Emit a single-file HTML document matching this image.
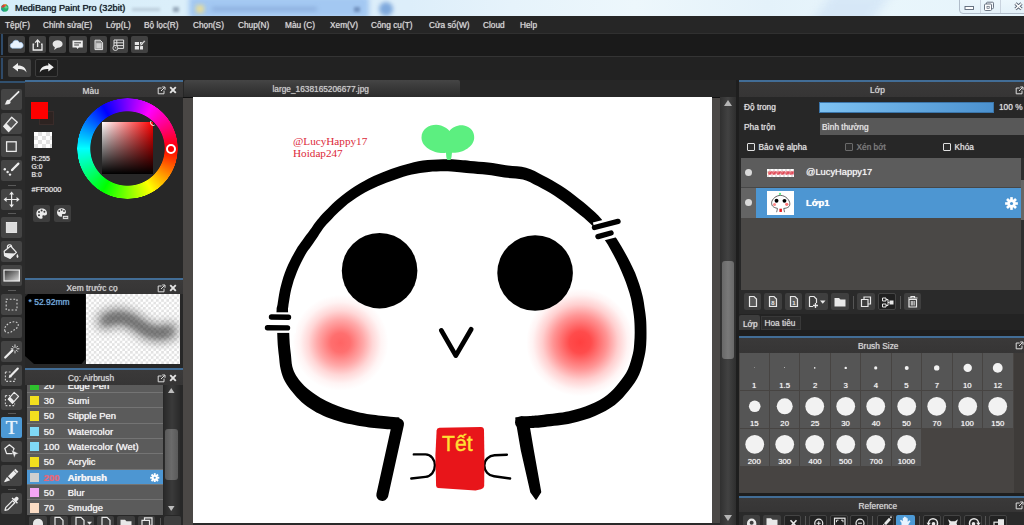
<!DOCTYPE html>
<html><head><meta charset="utf-8"><title>MediBang Paint Pro (32bit)</title>
<style>
*{box-sizing:border-box;margin:0;padding:0}
html,body{width:1024px;height:525px;overflow:hidden;background:#1d1d1d}
body{position:relative;font-family:"Liberation Sans","DejaVu Sans",sans-serif;font-size:8.3px;color:#d2d2d2}
.a{position:absolute}
.t{position:absolute;white-space:nowrap;line-height:1;text-shadow:0 0 .7px currentColor}
/* title */
#title{left:0;top:0;width:1024px;height:16.500px;overflow:hidden;background:linear-gradient(90deg,#d6edf9 0,#dbeffa 17%,#ddeefa 40%,#e6f3fb 50%,#edf7fc 62%,#e4f2fa 75%,#e9f6fc 85%,#e6f4fb 100%)}
#menubar{left:0;top:16px;width:1024px;height:17px;background:#262626}
#tb1{left:0;top:33px;width:1024px;height:23px;background:#1a1a1a;border-top:1px solid #303030}
#tb2{left:0;top:56px;width:1024px;height:25px;background:#222;border-top:1px solid #343434}
.btn{position:absolute;background:#414141;border-radius:2px}
.hdr{position:absolute;background:#333;border-top:2px solid #3d6a94}
.hdr .t{color:#cfcfcf}

.pn{position:absolute;background:#272727}
.hd{position:absolute;left:0;top:0;width:100%;border-top:2px solid #426d96;background:linear-gradient(#3a3939,#363535)}
.chk{background-color:#fff;background-image:linear-gradient(45deg,#e2e2e2 25%,transparent 25%,transparent 75%,#e2e2e2 75%),linear-gradient(45deg,#e2e2e2 25%,transparent 25%,transparent 75%,#e2e2e2 75%)}
</style></head><body>
<div id="title" class="a"><div class="a" style="left:189px;top:-4px;width:180px;height:22px;border-radius:4px;background:#a3c8f2;filter:blur(2.500px)"></div><div class="a" style="left:196px;top:5px;width:8px;height:8px;background:#e6dc9a;filter:blur(2px)"></div><div class="a" style="left:212px;top:7px;width:105px;height:4px;background:#7f9fd0;opacity:.6;filter:blur(2px)"></div><div class="a" style="left:354px;top:7px;width:6px;height:5px;background:#5b79a8;opacity:.7;filter:blur(1.500px)"></div><div class="a" style="left:379px;top:2px;width:14px;height:14px;border-radius:50%;background:#7fa9dd;filter:blur(2px)"></div><div class="a" style="left:132px;top:8px;width:28px;height:3px;background:#9aa8b8;opacity:.5;filter:blur(1.500px)"></div><div class="a" style="left:173px;top:7px;width:6px;height:5px;background:#66778c;opacity:.6;filter:blur(1.500px)"></div><div class="a" style="left:820px;top:-10px;width:60px;height:40px;background:#cfe2f5;opacity:.7;transform:skewX(-35deg);filter:blur(6px)"></div></div>
<div id="menubar" class="a"></div>
<div id="tb1" class="a"></div>
<div id="tb2" class="a"></div>
<svg class="a" style="left:0;top:2px" width="11" height="12" viewBox="0 2 11 12"><circle cx="4.800" cy="8" r="3.700" fill="#27b06c"/><path d="M1.200 7.600A3.700 3.700 0 0 1 6.600 4.700C5.800 6.600 4 7.600 1.200 7.600Z" fill="#e23b3b"/><path d="M3.400 4.600A3.700 3.700 0 0 1 6.800 4.800C6.200 5.600 5 5.800 3.400 4.600Z" fill="#f6a533"/><path d="M1.100 8A3.700 3.700 0 0 0 4 11.600C3.600 10 2.800 8.800 1.100 8Z" fill="#1f8f9f"/><ellipse cx="6" cy="7.200" rx="1.500" ry="1.200" fill="#7fe0a0" opacity=".7"/></svg>
<div class="t" style="left:15px;top:3.5px;font-size:9.2px;color:#16202a">MediBang Paint Pro (32bit)</div>
<div class="t m" style="left:5px;top:20.5px">Tệp(F)</div>
<div class="t m" style="left:43px;top:20.5px">Chỉnh sửa(E)</div>
<div class="t m" style="left:106px;top:20.5px">Lớp(L)</div>
<div class="t m" style="left:144px;top:20.5px">Bộ lọc(R)</div>
<div class="t m" style="left:193px;top:20.5px">Chọn(S)</div>
<div class="t m" style="left:238px;top:20.5px">Chụp(N)</div>
<div class="t m" style="left:285px;top:20.5px">Màu (C)</div>
<div class="t m" style="left:330px;top:20.5px">Xem(V)</div>
<div class="t m" style="left:371px;top:20.5px">Công cụ(T)</div>
<div class="t m" style="left:429px;top:20.5px">Cửa sổ(W)</div>
<div class="t m" style="left:483px;top:20.5px">Cloud</div>
<div class="t m" style="left:520px;top:20.5px">Help</div>
<div class="a" style="left:958.500px;top:-3px;width:70px;height:16.500px;border:1px solid #b0bcc9;border-radius:0 0 0 4px;background:linear-gradient(#edf8fd,#e4f1f9)"></div>
<div class="a" style="left:979.500px;top:0;width:1px;height:13px;background:#c9d3de"></div><div class="a" style="left:999.500px;top:0;width:1px;height:13px;background:#c9d3de"></div>
<svg class="a" style="left:958px;top:0" width="66" height="14" viewBox="0 0 66 14"><rect x="7" y="6.500" width="8.500" height="3" fill="#fff" stroke="#5a6575" stroke-width=".9"/><rect x="28.500" y="2.200" width="7" height="6.500" rx="1" fill="#f4f8fc" stroke="#5a6575" stroke-width=".9"/><rect x="26.500" y="4" width="7" height="6.500" rx="1" fill="#fff" stroke="#5a6575" stroke-width=".9"/><rect x="29" y="6.300" width="2.200" height="2" fill="none" stroke="#5a6575" stroke-width=".7"/><path d="M57.500 3.500 63.500 9M63.500 3.500 57.500 9" stroke="#5a6575" stroke-width="3.200"/><path d="M57.500 3.500 63.500 9M63.500 3.500 57.500 9" stroke="#fff" stroke-width="1.500"/></svg>
<!--MENU-->
<div class="btn" style="left:8.10px;top:35.6px;width:17.3px;height:17.6px"><svg width="17.3" height="17.6" viewBox="0 0 17.3 17.6"><path d="M4.2 12.2a2.6 2.6 0 0 1 .3-5.1 3.6 3.6 0 0 1 6.9-.6 2.9 2.9 0 0 1 1.6 5.7Z" fill="#e8f3ff" stroke="#9cc8f5" stroke-width=".6"/></svg></div>
<div class="btn" style="left:28.55px;top:35.6px;width:17.3px;height:17.6px"><svg width="17.3" height="17.6" viewBox="0 0 17.3 17.6"><path d="M5.2 8.2H4.2V14H13V8.2H12" fill="none" stroke="#eee" stroke-width="1.3"/><path d="M8.6 11V4.5M6.2 6.6 8.6 4 11 6.6" fill="none" stroke="#eee" stroke-width="1.3"/></svg></div>
<div class="btn" style="left:49.00px;top:35.6px;width:17.3px;height:17.6px"><svg width="17.3" height="17.6" viewBox="0 0 17.3 17.6"><ellipse cx="8.6" cy="8" rx="5" ry="3.8" fill="#e6e6e6"/><path d="M6 10.5 5.2 14 9 11.2Z" fill="#e6e6e6"/></svg></div>
<div class="btn" style="left:69.45px;top:35.6px;width:17.3px;height:17.6px"><svg width="17.3" height="17.6" viewBox="0 0 17.3 17.6"><path d="M3.5 4.5H13.8V11.5H9.8L8.6 13 7.4 11.5H3.5Z" fill="#eee"/><path d="M5.2 6.8H12M5.2 9H10" stroke="#3d3d3d" stroke-width="1"/></svg></div>
<div class="btn" style="left:89.90px;top:35.6px;width:17.3px;height:17.6px"><svg width="17.3" height="17.6" viewBox="0 0 17.3 17.6"><path d="M5 4.2H10.2L12.6 6.6V13.6H5Z" fill="#8d8d8d" stroke="#e4e4e4" stroke-width="1"/><path d="M6.3 7.2H11.4V12.4H6.3Z" fill="#cfcfcf"/></svg></div>
<div class="btn" style="left:110.35px;top:35.6px;width:17.3px;height:17.6px"><svg width="17.3" height="17.6" viewBox="0 0 17.3 17.6"><path d="M4 4H13.6V12.4H4ZM4 6.8H13.6M4 9.6H13.6M6.8 4V12.4" fill="none" stroke="#e4e4e4" stroke-width="1"/><circle cx="5.4" cy="12" r="2.5" fill="#3d3d3d" stroke="#e4e4e4" stroke-width=".9"/><path d="M5.4 10.8V12.1H6.4" stroke="#e4e4e4" stroke-width=".7" fill="none"/></svg></div>
<div class="btn" style="left:130.80px;top:35.6px;width:17.3px;height:17.6px"><svg width="17.3" height="17.6" viewBox="0 0 17.3 17.6"><path d="M3.8 6H8V9H3.8ZM9 6H12V9H9ZM3.8 10H8V13.6H3.8ZM9 10H12V13.6H9Z" fill="#e4e4e4"/><path d="M9.4 8.6 13.2 4.2 14.4 5.2 10.6 9.6 9 10Z" fill="#e4e4e4" stroke="#3d3d3d" stroke-width=".5"/></svg></div>
<div class="btn" style="left:8px;top:59.2px;width:23.3px;height:17.6px"><svg width="23.3" height="17.6" viewBox="0 0 23.3 17.6"><path d="M4.5 8.2 10 4V6.4C15 6.4 18 9 18.6 13.4 16.6 10.6 14 9.8 10 10V12.4Z" fill="#efefef"/></svg></div>
<div class="btn" style="left:34.5px;top:59.2px;width:23.3px;height:17.6px;background:#1e1e1e;border:1px solid #3c3c3c"><svg width="21.3" height="15.6" viewBox="1 1 21.3 15.6"><path d="M18.8 8.2 13.3 4V6.4C8.3 6.4 5.3 9 4.7 13.4 6.7 10.6 9.3 9.8 13.3 10V12.4Z" fill="#efefef"/></svg></div>
<div class="a" style="left:1px;top:34px;width:1.5px;height:21px;background:#2f4a68"></div><div class="a" style="left:1px;top:58px;width:1.5px;height:21px;background:#2f4a68"></div><!--TOOLBARS-->
<div class="a" style="left:0;top:80.500px;width:25px;height:445px;background:#2a2a2a;border-top:2px solid #31506e"></div>
<div class="btn" style="left:1.3px;top:89.0px;width:21.2px;height:21px;background:#444"><svg width="21.2" height="21" viewBox="0 0 21.2 21"><path d="M17.600 2.800 8.600 11.600" stroke="#ececec" stroke-width="1.800" stroke-linecap="round"/><path d="M7.200 10.400 9.600 12.800C9.800 14.800 8 15.800 3.600 15.400 5 14.200 4.600 11.600 7.200 10.400Z" fill="#ececec"/></svg></div>
<div class="btn" style="left:1.3px;top:112.5px;width:21.2px;height:21px;background:#444"><svg width="21.2" height="21" viewBox="0 0 21.2 21"><path d="M10.700 4.200 16.300 9.300 7.600 18.600 2.700 13.400Z" fill="#555" stroke="#ececec" stroke-width="1.300" stroke-linejoin="round"/><path d="M5.600 10.600 10.600 15.600 7.600 18.600 2.700 13.400Z" fill="#ececec"/></svg></div>
<div class="btn" style="left:1.3px;top:136.0px;width:21.2px;height:21px;background:#444"><svg width="21.2" height="21" viewBox="0 0 21.2 21"><rect x="5.600" y="5.800" width="9.600" height="9.600" fill="#4a4a4a" stroke="#ececec" stroke-width="1.300"/></svg></div>
<div class="btn" style="left:1.3px;top:159.5px;width:21.2px;height:21px;background:#444"><svg width="21.2" height="21" viewBox="0 0 21.2 21"><path d="M17.400 3.600 11 10" stroke="#ececec" stroke-width="2.200" stroke-linecap="round"/><path d="M11.200 8.400 12.800 10 10 11.200Z" fill="#ececec"/><circle cx="3.800" cy="9.200" r="1.200" fill="#ececec"/><circle cx="6.600" cy="12" r="1.200" fill="#ececec"/><circle cx="9" cy="14.600" r="1.200" fill="#ececec"/></svg></div>
<div class="btn" style="left:1.3px;top:188.5px;width:21.2px;height:21px;background:#444"><svg width="21.2" height="21" viewBox="0 0 21.2 21"><path d="M10.600 4V17M4 10.500H17.200" stroke="#ececec" stroke-width="1.200"/><path d="M10.600 2.600 13 5.600H8.200ZM10.600 18.400 13 15.400H8.200ZM2.600 10.500 5.600 8.100V12.900ZM18.600 10.500 15.600 8.100V12.900Z" fill="#ececec"/></svg></div>
<div class="btn" style="left:1.3px;top:217.0px;width:21.2px;height:21px;background:#444"><svg width="21.2" height="21" viewBox="0 0 21.2 21"><rect x="5.300" y="5.400" width="10.400" height="10.200" fill="#dcdcdc" stroke="#f4f4f4" stroke-width=".8"/></svg></div>
<div class="btn" style="left:1.3px;top:241.0px;width:21.2px;height:21px;background:#444"><svg width="21.2" height="21" viewBox="0 0 21.2 21"><path d="M3.200 10.200 9.600 5 15.400 11.400 9.200 17.400 3.600 14.600Z" fill="none" stroke="#ececec" stroke-width="1.200" stroke-linejoin="round"/><path d="M3.400 12 14.200 12.400 9.200 17.400 3.600 14.600Z" fill="#ececec"/><path d="M6.600 7.600C5.400 3.400 10.400 2.200 10.800 6" fill="none" stroke="#ececec" stroke-width="1.100"/><path d="M16.200 12.800C17.600 14.800 18 16 16.600 17 15 16.200 15.400 14.600 16.200 12.800Z" fill="#ececec"/></svg></div>
<div class="btn" style="left:1.3px;top:265.0px;width:21.2px;height:21px;background:#444"><svg width="21.2" height="21" viewBox="0 0 21.2 21"><defs><linearGradient id="tg" x1="0" y1="0" x2="1" y2="1"><stop offset="0" stop-color="#2e2e2e"/><stop offset="1" stop-color="#d8d8d8"/></linearGradient></defs><rect x="3" y="5" width="15.400" height="11" fill="url(#tg)" stroke="#ececec" stroke-width="1.200"/></svg></div>
<div class="btn" style="left:1.3px;top:293.5px;width:21.2px;height:21px;background:#444"><svg width="21.2" height="21" viewBox="0 0 21.2 21"><rect x="5.200" y="5.200" width="10.800" height="10.800" fill="none" stroke="#cfcfcf" stroke-width="1.100" stroke-dasharray="1.800 1.800"/></svg></div>
<div class="btn" style="left:1.3px;top:317.0px;width:21.2px;height:21px;background:#444"><svg width="21.2" height="21" viewBox="0 0 21.2 21"><path d="M4 14C2.600 11 5.400 7.400 9.400 5.600 13.400 3.800 17.800 5 17.200 8.400 16.600 11.600 13 12.600 10.600 14.600 8.400 16.400 5 16.200 4 14Z" fill="none" stroke="#cfcfcf" stroke-width="1.100" stroke-dasharray="1.700 1.600"/></svg></div>
<div class="btn" style="left:1.3px;top:341.0px;width:21.2px;height:21px;background:#444"><svg width="21.2" height="21" viewBox="0 0 21.2 21"><path d="M4.200 16.600 11.400 9.400" stroke="#ececec" stroke-width="2.200" stroke-linecap="round"/><path d="M14 3.400V6.800M14 9.600V12.400M9.800 7.800H12.400M15.600 7.800H18.400M11.200 5 12.800 6.600M16.800 5 15.200 6.600M16.800 10.600 15.200 9" stroke="#ececec" stroke-width=".9"/></svg></div>
<div class="btn" style="left:1.3px;top:365.0px;width:21.2px;height:21px;background:#444"><svg width="21.2" height="21" viewBox="0 0 21.2 21"><path d="M4.400 7H10M4.400 7V16.400H14V12" fill="none" stroke="#cfcfcf" stroke-width="1.100" stroke-dasharray="1.800 1.600"/><path d="M16.800 3.600 9.800 10.800" stroke="#ececec" stroke-width="2.200" stroke-linecap="round"/><path d="M8.600 9.600 11 12 7.600 13Z" fill="#ececec"/></svg></div>
<div class="btn" style="left:1.3px;top:388.5px;width:21.2px;height:21px;background:#444"><svg width="21.2" height="21" viewBox="0 0 21.2 21"><path d="M4.400 6.600H9M4.400 6.600V16.600H13.600V14.600" fill="none" stroke="#cfcfcf" stroke-width="1.100" stroke-dasharray="1.800 1.600"/><path d="M13.200 3.400 17.600 7.400 11.400 14.400 7.200 10.200Z" fill="#555" stroke="#ececec" stroke-width="1.200" stroke-linejoin="round"/><path d="M9.200 8 13.400 12.200 11.400 14.400 7.200 10.200Z" fill="#ececec"/></svg></div>
<div class="btn" style="left:1.3px;top:416.5px;width:21.2px;height:21px;background:#4d9ad6"><div class="t" style="left:4.5px;top:1px;font-family:'Liberation Serif',serif;font-size:19px;color:#e6f2fb">T</div></div>
<div class="btn" style="left:1.3px;top:440.5px;width:21.2px;height:21px;background:#444"><svg width="21.2" height="21" viewBox="0 0 21.2 21"><path d="M3.800 7.400 8.400 3.800 13 7.400 11.400 12.600H5.600Z" fill="none" stroke="#ececec" stroke-width="1.300" stroke-linejoin="round"/><path d="M10.400 9 17.800 12.400 14.600 13.600 13.400 17Z" fill="#ececec" stroke="#444" stroke-width=".5"/></svg></div>
<div class="btn" style="left:1.3px;top:464.5px;width:21.2px;height:21px;background:#444"><svg width="21.2" height="21" viewBox="0 0 21.2 21"><path d="M14.400 3.800 17.400 6.800 10 14.200 7 11.200Z" fill="#ececec"/><path d="M12.600 5.200 15.800 8.400" stroke="#444" stroke-width=".8"/><path d="M6 12 9.200 15.200 3.600 17.200 3.200 16.400Z" fill="#ececec"/></svg></div>
<div class="btn" style="left:1.3px;top:493.0px;width:21.2px;height:21px;background:#444"><svg width="21.2" height="21" viewBox="0 0 21.2 21"><path d="M11.600 7.600 13.800 9.800 7 16.600 4 17.400 4.800 14.400Z" fill="none" stroke="#ececec" stroke-width="1.300" stroke-linejoin="round"/><path d="M10.600 5.400 16 10.800 17 9.800 15.600 8.400 17.400 6.600C18.400 5 16.400 3 14.800 4L13 5.800 11.600 4.400Z" fill="#ececec"/></svg></div>
<div class="a" style="left:8px;top:184.5px;width:8px;height:1px;background:#5a5a5a"></div>
<div class="a" style="left:8px;top:213.0px;width:8px;height:1px;background:#5a5a5a"></div>
<div class="a" style="left:8px;top:289.5px;width:8px;height:1px;background:#5a5a5a"></div>
<div class="a" style="left:8px;top:413.0px;width:8px;height:1px;background:#5a5a5a"></div>
<div class="a" style="left:8px;top:489.0px;width:8px;height:1px;background:#5a5a5a"></div>
<div class="pn" style="left:25px;top:80px;width:157.700px;height:198px"><div class="hd" style="height:16.5px"><div class="t" style="left:57.5px;top:4.500px;font-size:8.4px;color:#cfcfcf">Màu</div><svg class="a" style="left:131.5px;top:3.5px" width="9" height="9" viewBox="0 0 9 9"><path d="M4.6 2H1.2V7.8H7V4.6" fill="none" stroke="#ddd" stroke-width="1"/><path d="M4 5 7.6 1.4M5.2 1H8V3.8" fill="none" stroke="#ddd" stroke-width="1"/></svg><svg class="a" style="left:144.0px;top:4.0px" width="8" height="8" viewBox="0 0 8 8"><path d="M1.2 1.2 6.8 6.8M6.8 1.2 1.2 6.8" stroke="#e4e4e4" stroke-width="1.9"/></svg></div>
<div class="a" style="left:13.5px;top:30.5px;width:15.5px;height:14px;background:#2d2321;border:1px solid #3a2c2a"></div><div class="a" style="left:6px;top:22px;width:17px;height:16.5px;background:#fe0000"></div><div class="a chk" style="left:9px;top:51.5px;width:17.5px;height:16.5px;background-size:8px 8px;background-position:0 0,4px 4px"></div><div class="t" style="left:6.5px;top:75.5px;font-size:6.9px;color:#e0e0e0">R:255</div><div class="t" style="left:6.5px;top:83.5px;font-size:6.9px;color:#e0e0e0">G:0</div><div class="t" style="left:6.5px;top:91.5px;font-size:6.9px;color:#e0e0e0">B:0</div><div class="t" style="left:6.5px;top:105.5px;font-size:7.5px;color:#e0e0e0">#FF0000</div><div class="btn" style="left:8px;top:124.5px;width:17.3px;height:17.3px;background:#3e3e3e"><svg width="17.3" height="17.3" viewBox="0 0 17.3 17.3"><path d="M8.8 3.6C5.4 3.6 3.4 6 3.4 8.8 3.4 11.8 5.8 13.8 8.4 13.8 10 13.8 9.6 12.4 9.4 11.6 9.2 10.6 10 10.2 11 10.4 12.8 10.8 14 9.8 14 8.2 14 5.6 11.8 3.6 8.8 3.6Z" fill="#ececec"/><circle cx="6" cy="7" r="1" fill="#3e3e3e"/><circle cx="8.6" cy="5.6" r="1" fill="#3e3e3e"/><circle cx="11.4" cy="6.8" r="1" fill="#3e3e3e"/><circle cx="6" cy="10.2" r="1" fill="#3e3e3e"/></svg></div><div class="btn" style="left:28.5px;top:124.5px;width:17.3px;height:17.3px;background:#3e3e3e"><svg width="17.3" height="17.3" viewBox="0 0 17.3 17.3"><path d="M7.6 3.2C4.8 3.2 3 5.2 3 7.6 3 10 5 11.8 7.2 11.8 8.6 11.8 8.2 10.6 8 10 7.8 9.2 8.6 8.8 9.4 9 11 9.2 12 8.4 12 7 12 4.8 10.2 3.2 7.6 3.2Z" fill="#ececec"/><circle cx="5.2" cy="6" r=".9" fill="#3e3e3e"/><circle cx="7.6" cy="4.9" r=".9" fill="#3e3e3e"/><circle cx="10" cy="6" r=".9" fill="#3e3e3e"/><rect x="8.6" y="10.6" width="6" height="3.6" fill="#ececec" stroke="#3e3e3e" stroke-width=".6"/><path d="M9.8 12.4H13.4" stroke="#3e3e3e" stroke-width=".8"/></svg></div><div class="a" style="left:52px;top:18px;width:101px;height:101px;border-radius:50%;background:conic-gradient(from 90deg,#ff0000,#ffff00,#00ff00,#00ffff,#0000ff,#ff00ff,#ff0000);-webkit-mask:radial-gradient(circle closest-side,transparent 36.8px,#000 37.6px,#000 50px,transparent 50.6px);mask:radial-gradient(circle closest-side,transparent 36.8px,#000 37.6px,#000 50px,transparent 50.6px)"></div><div class="a" style="left:77px;top:42px;width:51px;height:51.5px;background:linear-gradient(to top,#000,rgba(0,0,0,0)),linear-gradient(to right,#fff,#f00)"></div><div class="a" style="left:124.500px;top:38.500px;width:7.500px;height:7.500px;border-radius:50%;border:1.500px solid #fff;clip-path:inset(2.500px 2.500px 0 0)"></div><div class="a" style="left:140.5px;top:63.5px;width:10px;height:10px;border-radius:50%;border:2px solid #fff;background:#f00"></div></div>
<div class="pn" style="left:25px;top:278px;width:157.700px;height:90px"><div class="hd" style="height:16px"><div class="t" style="left:41.500px;top:4.200px;font-size:8.400px;color:#cfcfcf">Xem trước cọ</div><svg class="a" style="left:131.5px;top:3.5px" width="9" height="9" viewBox="0 0 9 9"><path d="M4.6 2H1.2V7.8H7V4.6" fill="none" stroke="#ddd" stroke-width="1"/><path d="M4 5 7.6 1.4M5.2 1H8V3.8" fill="none" stroke="#ddd" stroke-width="1"/></svg><svg class="a" style="left:144.0px;top:4.0px" width="8" height="8" viewBox="0 0 8 8"><path d="M1.2 1.2 6.8 6.8M6.8 1.2 1.2 6.8" stroke="#e4e4e4" stroke-width="1.9"/></svg></div><svg class="a" style="left:0;top:16px" width="61" height="70" viewBox="0 0 61 70"><path d="M3 0H60.500V65L56.500 70H9L0 62V3Z" fill="#000"/></svg><div class="t" style="left:3.500px;top:19.500px;font-size:8.500px;color:#6fa8dc">* 52.92mm</div><div class="a chk" style="left:61px;top:16.300px;width:93.600px;height:70px;background-size:5.200px 5.200px;background-position:0 0,2.600px 2.600px;overflow:hidden"><svg width="94" height="70" viewBox="0 0 94 70"><defs><filter id="bl" x="-30%" y="-100%" width="160%" height="300%"><feGaussianBlur stdDeviation="5.500"/></filter></defs><path d="M19 27C30 20 42 23 54 32 64 40 74 41 84 37" fill="none" stroke="#1a1a1a" stroke-opacity=".7" stroke-width="14" stroke-linecap="round" filter="url(#bl)"/></svg></div></div>
<div class="pn" style="left:25px;top:368px;width:157.700px;height:157px;overflow:hidden"><div class="hd" style="height:16.500px"><div class="t" style="left:43px;top:3.800px;font-size:8.4px;color:#cfcfcf">Cọ: Airbrush</div><svg class="a" style="left:131.5px;top:3.5px" width="9" height="9" viewBox="0 0 9 9"><path d="M4.6 2H1.2V7.8H7V4.6" fill="none" stroke="#ddd" stroke-width="1"/><path d="M4 5 7.6 1.4M5.2 1H8V3.8" fill="none" stroke="#ddd" stroke-width="1"/></svg><svg class="a" style="left:144.0px;top:4.0px" width="8" height="8" viewBox="0 0 8 8"><path d="M1.2 1.2 6.8 6.8M6.8 1.2 1.2 6.8" stroke="#e4e4e4" stroke-width="1.9"/></svg></div>
<div class="a" style="left:1.5px;top:16.5px;width:136.5px;height:130px;background:#5b5b5b;overflow:hidden"><div class="a" style="left:0;top:-6.85px;width:136.5px;height:15.35px;border-bottom:1px solid #747474;"><div class="a" style="left:3px;top:3px;width:9.800px;height:9.200px;background:#2ec02e"></div><div class="t" style="left:17.3px;top:3px;font-size:9.45px;color:#efefef;">20</div><div class="t" style="left:41.3px;top:3px;font-size:9.45px;color:#f4f4f4;">Edge Pen</div></div>
<div class="a" style="left:0;top:8.50px;width:136.5px;height:15.35px;border-bottom:1px solid #747474;"><div class="a" style="left:3px;top:3px;width:9.800px;height:9.200px;background:#f2df1e"></div><div class="t" style="left:17.3px;top:3px;font-size:9.45px;color:#efefef;">30</div><div class="t" style="left:41.3px;top:3px;font-size:9.45px;color:#f4f4f4;">Sumi</div></div>
<div class="a" style="left:0;top:23.85px;width:136.5px;height:15.35px;border-bottom:1px solid #747474;"><div class="a" style="left:3px;top:3px;width:9.800px;height:9.200px;background:#f2df1e"></div><div class="t" style="left:17.3px;top:3px;font-size:9.45px;color:#efefef;">50</div><div class="t" style="left:41.3px;top:3px;font-size:9.45px;color:#f4f4f4;">Stipple Pen</div></div>
<div class="a" style="left:0;top:39.20px;width:136.5px;height:15.35px;border-bottom:1px solid #747474;"><div class="a" style="left:3px;top:3px;width:9.800px;height:9.200px;background:#7fd9f7"></div><div class="t" style="left:17.3px;top:3px;font-size:9.45px;color:#efefef;">50</div><div class="t" style="left:41.3px;top:3px;font-size:9.45px;color:#f4f4f4;">Watercolor</div></div>
<div class="a" style="left:0;top:54.55px;width:136.5px;height:15.35px;border-bottom:1px solid #747474;"><div class="a" style="left:3px;top:3px;width:9.800px;height:9.200px;background:#7fd9f7"></div><div class="t" style="left:17.3px;top:3px;font-size:9.45px;color:#efefef;">100</div><div class="t" style="left:41.3px;top:3px;font-size:9.45px;color:#f4f4f4;">Watercolor (Wet)</div></div>
<div class="a" style="left:0;top:69.90px;width:136.5px;height:15.35px;border-bottom:1px solid #747474;"><div class="a" style="left:3px;top:3px;width:9.800px;height:9.200px;background:#f2df1e"></div><div class="t" style="left:17.3px;top:3px;font-size:9.45px;color:#efefef;">50</div><div class="t" style="left:41.3px;top:3px;font-size:9.45px;color:#f4f4f4;">Acrylic</div></div>
<div class="a" style="left:0;top:85.25px;width:136.5px;height:15.35px;border-bottom:1px solid #747474;background:#4d96d2;"><div class="a" style="left:3px;top:3px;width:9.800px;height:9.200px;background:#cfcfcf"></div><div class="t" style="left:17.3px;top:3px;font-size:9.45px;color:#e5687c;font-weight:bold;">200</div><div class="t" style="left:41.3px;top:3px;font-size:9.45px;color:#f4f4f4;font-weight:bold;">Airbrush</div><svg class="a" style="left:123.5px;top:3px" width="9.5" height="9.5" viewBox="-5 -5 10 10"><g fill="#fff"><circle r="3"/><rect x="-1" y="-4.8" width="2" height="3" transform="rotate(0)"/><rect x="-1" y="-4.8" width="2" height="3" transform="rotate(45)"/><rect x="-1" y="-4.8" width="2" height="3" transform="rotate(90)"/><rect x="-1" y="-4.8" width="2" height="3" transform="rotate(135)"/><rect x="-1" y="-4.8" width="2" height="3" transform="rotate(180)"/><rect x="-1" y="-4.8" width="2" height="3" transform="rotate(225)"/><rect x="-1" y="-4.8" width="2" height="3" transform="rotate(270)"/><rect x="-1" y="-4.8" width="2" height="3" transform="rotate(315)"/></g><circle r="1.1" fill="#4d96d2"/></svg></div>
<div class="a" style="left:0;top:100.60px;width:136.5px;height:15.35px;border-bottom:1px solid #747474;"><div class="a" style="left:3px;top:3px;width:9.800px;height:9.200px;background:#f5a6f5"></div><div class="t" style="left:17.3px;top:3px;font-size:9.45px;color:#efefef;">50</div><div class="t" style="left:41.3px;top:3px;font-size:9.45px;color:#f4f4f4;">Blur</div></div>
<div class="a" style="left:0;top:115.95px;width:136.5px;height:15.35px;border-bottom:1px solid #747474;"><div class="a" style="left:3px;top:3px;width:9.800px;height:9.200px;background:#fbdcc4"></div><div class="t" style="left:17.3px;top:3px;font-size:9.45px;color:#efefef;">70</div><div class="t" style="left:41.3px;top:3px;font-size:9.45px;color:#f4f4f4;">Smudge</div></div>
</div>
<div class="a" style="left:138.5px;top:16.5px;width:16.5px;height:130px;background:linear-gradient(90deg,#2a2a2a,#3a3a3a 50%,#2a2a2a)"><div class="a" style="left:1px;top:44px;width:13.5px;height:51px;border-radius:3px;background:linear-gradient(90deg,#5a5a5a,#6b6b6b 50%,#5a5a5a)"></div><svg class="a" style="left:4.500px;top:3.500px" width="6.500" height="5" viewBox="0 0 8 6"><path d="M4 0 8 6H0Z" fill="#bdbdbd"/></svg><svg class="a" style="left:4.500px;top:121.500px" width="6.500" height="5" viewBox="0 0 8 6"><path d="M4 6 8 0H0Z" fill="#bdbdbd"/></svg></div>
<div class="btn" style="left:3.8px;top:148px;width:18.2px;height:17px;background:#3e3e3e"><svg width="18.2" height="17" viewBox="0 2.2 18.2 17"><path d="M4 9.5A5 4.6 0 0 1 14 9.5V13H4Z" fill="#e8e8e8"/></svg></div><div class="btn" style="left:25.0px;top:148px;width:17.8px;height:17px;background:#3e3e3e"><svg width="17.8" height="17" viewBox="0 2.2 17.8 17"><path d="M5 3.5H10L13 6.5V14H5Z" fill="none" stroke="#e8e8e8" stroke-width="1.2"/></svg></div><div class="btn" style="left:46.0px;top:148px;width:22.5px;height:17px;background:#3e3e3e"><svg width="22.5" height="17" viewBox="0 2.2 22.5 17"><path d="M5 3.5H10L13 6.5V14H5Z" fill="none" stroke="#e8e8e8" stroke-width="1.2"/><path d="M16 8H21L18.5 11Z" fill="#e8e8e8"/></svg></div><div class="btn" style="left:71.5px;top:148px;width:17.5px;height:17px;background:#3e3e3e"><svg width="17.5" height="17" viewBox="0 2.2 17.5 17"><path d="M5 3.5H10L13 6.5V14H5Z" fill="none" stroke="#e8e8e8" stroke-width="1.2"/></svg></div><div class="btn" style="left:92.0px;top:148px;width:18.0px;height:17px;background:#3e3e3e"><svg width="18.0" height="17" viewBox="0 2.2 18.0 17"><path d="M3.5 6H8L9.5 7.5H14.5V14H3.5Z" fill="#e8e8e8"/></svg></div><div class="btn" style="left:112.8px;top:148px;width:17.2px;height:17px;background:#3e3e3e"><svg width="17.2" height="17" viewBox="0 2.2 17.2 17"><path d="M4 6.5H11.5V14H4ZM6.5 6V4H14V11.5H12" fill="none" stroke="#e8e8e8" stroke-width="1.2"/></svg></div><div class="a" style="left:134.5px;top:150px;width:1px;height:14px;background:#555"></div><div class="btn" style="left:139.0px;top:148px;width:17.0px;height:17px;background:#3e3e3e"><svg width="17.0" height="17" viewBox="0 2.2 17.0 17"></svg></div></div>
<!--LEFT-->
<div class="a" style="left:182.700px;top:80px;width:556.300px;height:445px;background:#1e1e1e"></div>
<div class="a" style="left:182.700px;top:80px;width:556.300px;height:17px;background:#262626"></div>
<div class="a" style="left:184px;top:80px;width:276px;height:17px;background:linear-gradient(#454545,#3a3a3a 40%,#2c2c2c);border-radius:2px 2px 0 0"><div class="t" style="left:88.500px;top:4.500px;font-size:8.3px;color:#c8c8c8">large_1638165206677.jpg</div></div>
<div class="a" style="left:182.700px;top:97px;width:537.300px;height:428px;background:#4a4745;border-top:1px solid #111"></div>
<!--DRAW--><svg class="a" style="left:193px;top:97px" width="519" height="426" viewBox="193 97 519 426">
<defs><radialGradient id="bl1"><stop offset="0" stop-color="#ff6464"/><stop offset=".2" stop-color="#ff6464" stop-opacity=".93"/><stop offset=".48" stop-color="#ff6464" stop-opacity=".56"/><stop offset=".67" stop-color="#ff6464" stop-opacity=".26"/><stop offset=".85" stop-color="#ff6464" stop-opacity=".07"/><stop offset="1" stop-color="#ff6464" stop-opacity="0"/></radialGradient><radialGradient id="bl2"><stop offset="0" stop-color="#ff4040"/><stop offset=".2" stop-color="#ff4040" stop-opacity=".94"/><stop offset=".5" stop-color="#ff4040" stop-opacity=".56"/><stop offset=".7" stop-color="#ff4040" stop-opacity=".25"/><stop offset=".88" stop-color="#ff4040" stop-opacity=".06"/><stop offset="1" stop-color="#ff4040" stop-opacity="0"/></radialGradient></defs>
<rect x="193" y="97" width="519" height="426" fill="#fff"/>
<circle cx="340.500" cy="342.800" r="48" fill="url(#bl1)"/><circle cx="580.200" cy="342.300" r="54" fill="url(#bl2)"/>
<path d="M399.3 417.5C397.9 417.4 395.3 417.3 390.5 416.8C385.8 416.3 376.4 415.4 370.9 414.6C365.3 413.8 361.7 413.0 357.4 412.0C353.1 411.0 349.2 410.0 345.0 408.6C340.8 407.2 336.4 405.6 332.3 403.8C328.3 402.1 324.3 400.2 320.7 398.1C317.1 396.0 313.5 393.5 310.5 391.1C307.4 388.7 304.8 386.4 302.4 383.8C300.0 381.2 297.7 378.3 296.0 375.5C294.3 372.6 293.2 370.1 292.3 366.6C291.5 363.1 291.3 358.2 290.9 354.3C290.4 350.4 290.0 346.9 289.7 343.2C289.4 339.6 289.4 336.1 289.2 332.2C289.0 328.3 288.7 323.4 288.5 319.8C288.3 316.1 288.1 312.5 288.0 310.2C288.0 307.9 287.9 309.5 288.4 305.9C289.0 302.4 290.0 294.5 291.4 288.8C292.8 283.2 294.6 277.7 296.9 272.1C299.2 266.5 302.7 259.4 305.1 255.1C307.5 250.7 309.1 249.2 311.3 246.0C313.5 242.8 315.6 239.5 318.2 235.9C320.7 232.3 322.2 229.3 326.4 224.5C330.7 219.8 337.9 212.3 343.6 207.4C349.3 202.5 354.9 198.6 360.7 195.1C366.4 191.5 372.1 188.8 377.8 186.3C383.5 183.7 389.2 181.7 394.9 179.7C400.6 177.8 406.3 175.9 411.9 174.6C417.6 173.3 422.8 172.4 428.8 171.9C434.8 171.3 442.6 171.2 447.8 171.3C452.9 171.4 455.9 172.0 459.5 172.3C463.1 172.7 464.9 172.9 469.5 173.3C474.0 173.7 481.0 174.1 486.8 174.8C492.7 175.5 498.3 176.8 504.4 177.6C510.4 178.4 517.4 178.1 522.9 179.5C528.4 181.0 532.3 183.4 537.6 186.1C542.8 188.9 548.9 192.1 554.6 195.8C560.3 199.5 566.4 204.1 571.8 208.3C577.3 212.5 582.9 217.0 587.4 221.0C591.9 225.0 595.9 229.0 599.0 232.4C602.1 235.9 603.7 238.1 606.1 241.9C608.6 245.7 611.5 251.1 613.7 255.2C615.9 259.3 617.6 262.8 619.3 266.5C621.0 270.2 622.5 273.7 623.9 277.3C625.4 280.8 626.6 284.3 627.8 287.9C629.0 291.4 630.1 294.9 631.0 298.7C631.8 302.6 632.6 307.3 633.2 310.9C633.7 314.5 634.1 316.8 634.3 320.4C634.6 324.0 634.7 328.7 634.7 332.5C634.7 336.3 634.5 340.0 634.2 343.5C633.9 347.0 633.9 349.3 632.9 353.6C631.8 357.9 630.3 364.4 628.0 369.2C625.8 374.0 622.7 378.2 619.2 382.5C615.8 386.8 612.1 391.3 607.2 395.0C602.4 398.7 596.6 401.9 590.2 404.6C583.8 407.4 576.7 409.7 568.9 411.3C561.1 413.0 550.1 413.9 543.6 414.7C537.0 415.5 533.4 415.7 529.6 416.0C525.8 416.3 522.3 416.3 520.8 416.3L521.2 428.3C522.7 428.2 526.4 428.2 530.4 428.0C534.4 427.8 538.2 427.7 545.0 426.9C551.9 426.1 563.2 425.1 571.5 423.3C579.8 421.4 587.8 419.0 595.0 416.0C602.2 412.9 609.1 409.3 614.8 405.0C620.4 400.7 624.9 395.4 629.0 390.3C633.0 385.2 636.6 380.0 639.2 374.4C641.8 368.7 643.4 361.4 644.5 356.4C645.7 351.4 645.9 348.5 646.2 344.5C646.5 340.5 646.5 336.7 646.5 332.5C646.5 328.3 646.4 323.5 646.1 319.6C645.8 315.7 645.4 313.0 644.8 309.1C644.3 305.2 643.6 300.2 642.6 296.1C641.7 291.9 640.5 288.0 639.2 284.1C637.9 280.3 636.6 276.5 635.1 272.7C633.5 269.0 631.6 265.3 629.7 261.5C627.7 257.7 625.8 254.0 623.3 249.8C620.8 245.6 617.6 240.2 614.9 236.1C612.2 232.1 610.3 229.5 607.0 225.6C603.7 221.6 599.8 217.0 595.2 212.6C590.6 208.1 584.9 203.3 579.2 198.9C573.5 194.4 567.2 189.7 561.2 185.8C555.1 181.9 548.9 178.5 543.0 175.5C537.2 172.4 532.3 169.4 526.1 167.7C519.9 165.9 512.3 166.1 506.0 165.2C499.8 164.3 494.3 163.1 488.4 162.4C482.4 161.7 475.2 161.3 470.5 160.9C465.9 160.5 464.3 160.3 460.5 160.1C456.7 159.8 453.3 159.3 447.8 159.3C442.4 159.3 434.0 159.4 427.6 160.1C421.2 160.8 415.4 161.9 409.3 163.4C403.2 164.9 397.1 166.7 391.1 168.9C385.1 171.0 379.2 173.4 373.2 176.3C367.2 179.2 361.2 182.4 355.1 186.3C349.1 190.3 343.1 194.6 337.0 199.8C331.0 205.1 323.5 212.8 319.0 217.9C314.5 222.9 312.8 226.4 310.0 230.1C307.3 233.8 305.0 236.7 302.7 240.0C300.3 243.3 298.6 245.3 295.9 249.9C293.3 254.6 289.2 261.9 286.7 267.9C284.2 273.9 282.3 280.1 280.8 286.2C279.2 292.2 278.3 300.1 277.6 304.1C276.9 308.0 276.7 307.1 276.6 309.8C276.4 312.5 276.4 316.4 276.5 320.2C276.6 324.1 277.0 328.8 277.2 332.8C277.4 336.8 277.4 340.3 277.7 344.2C278.0 348.0 278.4 351.5 278.9 355.7C279.4 359.9 279.6 365.1 280.7 369.4C281.7 373.7 283.0 377.7 285.0 381.5C287.0 385.3 289.8 388.8 292.6 392.2C295.3 395.6 298.1 398.8 301.5 401.9C305.0 404.9 309.1 408.0 313.3 410.5C317.5 413.1 322.1 415.3 326.7 417.2C331.3 419.1 336.3 420.7 341.0 422.0C345.6 423.3 349.9 424.1 354.6 425.0C359.3 425.9 363.3 426.7 369.1 427.4C375.0 428.1 384.5 428.9 389.5 429.2C394.4 429.6 397.1 429.4 398.7 429.5Z" fill="#000"/><circle cx="521" cy="422.300" r="6"/>
<path d="M398 424 382.3 495" stroke="#000" stroke-width="12" stroke-linecap="round" fill="none"/>
<path d="M516 418 527.5 417.5 533 450 540.5 492 536 499 531 492 521.5 450Z" fill="#000" stroke="#000" stroke-width="1.5" stroke-linejoin="round"/>
<circle cx="379.6" cy="270.7" r="37.8"/><circle cx="535.1" cy="273" r="37.8"/>
<path d="M268 322.600H296" stroke="#fff" stroke-width="20.600"/><path d="M595.400 232.300 614.800 227.300" stroke="#fff" stroke-width="20"/><path d="M271.500 317 288.500 317.300M267.500 327.700 287.500 327.900M594.500 227.500 618 221.400M598 236.600 611 233" stroke="#000" stroke-width="5.400" stroke-linecap="round"/>
<path d="M441.3 330.4 455.8 355.6 471.2 329.3" stroke="#000" stroke-width="4.800" stroke-linecap="round" stroke-linejoin="round" fill="none"/>
<path d="M447.300 160C445.800 157 446.300 154.500 446 152.800 436 154.5 421.5 148 421.5 137.5 421.5 127 433 123 441 125.5 445 126.800 448 129 449.5 131 452 127.500 458 124.500 464 125.500 471 126.800 474.500 132 474.200 138 473.800 147 462 153.500 452 152.800 451.500 155 452 157.500 450.500 160Z" fill="#5cef80"/>
<path d="M413.800 454.400H425.500C431 454.400 434.900 459.500 434.900 465.300 434.900 471.500 431 476.300 425.500 476.900L411.300 478.500M506.900 454.700 494.500 455.300C489 455.600 484.300 460 484.300 465.400 484.300 471 488.500 475.600 494 476.300L510.100 478.500" stroke="#000" stroke-width="2.400" fill="none" stroke-linecap="round"/>
<path d="M439.500 427.800 481 427Q483.800 427 484 430L484.400 455.500 484.200 486Q484 488.500 481 489.300L475.500 490.400 438 488Q436.200 487.800 436.100 485.500L435.400 455.500 436.600 430.500Q436.800 428 439.500 427.800Z" fill="#e8151a"/>
<text x="442" y="450.600" font-family="'Liberation Sans',sans-serif" font-size="22" fill="#ffdf33" stroke="#ffdf33" stroke-width=".45" textLength="30.500" lengthAdjust="spacingAndGlyphs">Tết</text>
<text x="293" y="145.300" font-family="'Liberation Serif',serif" font-size="11.200" fill="#dc2838">@LucyHappy17</text><text x="293" y="157" font-family="'Liberation Serif',serif" font-size="11.200" fill="#dc2838">Hoidap247</text>
</svg>
<!--/DRAW-->
<div class="a" style="left:193px;top:522.5px;width:527px;height:3px;background:#2a2a2a"></div>
<div class="a" style="left:720px;top:97px;width:15.5px;height:428px;background:linear-gradient(90deg,#303030,#424242 50%,#2e2e2e)"><div class="a" style="left:1.5px;top:163.5px;width:12.5px;height:98px;border-radius:3px;background:linear-gradient(90deg,#686868,#797979 50%,#696969)"></div><svg class="a" style="left:4px;top:3px" width="8" height="6" viewBox="0 0 8 6"><path d="M4 0 8 6H0Z" fill="#b5b5b5"/></svg><svg class="a" style="left:4px;top:418px" width="8" height="6" viewBox="0 0 8 6"><path d="M4 6 8 0H0Z" fill="#b5b5b5"/></svg></div>
<!--CANVAS-->
<div class="a" style="left:735.5px;top:80px;width:3.5px;height:445px;background:#1e1e1e"></div>
<div class="pn" style="left:739px;top:80px;width:285px;height:255px;background:#272727"><div class="hd" style="height:17px"><div class="t" style="left:131px;top:4px;font-size:8.4px;color:#cfcfcf">Lớp</div><svg class="a" style="left:276.0px;top:3.5px" width="9" height="9" viewBox="0 0 9 9"><path d="M4.6 2H1.2V7.8H7V4.6" fill="none" stroke="#ddd" stroke-width="1"/><path d="M4 5 7.6 1.4M5.2 1H8V3.8" fill="none" stroke="#ddd" stroke-width="1"/></svg></div>
<div class="t" style="left:5px;top:23px;font-size:8.3px;color:#dcdcdc">Độ trong</div><div class="a" style="left:79.5px;top:21.5px;width:175.5px;height:11.5px;background:linear-gradient(90deg,#7ec2f2,#4b91cf);border:1px solid #3b76ab"></div><div class="t" style="left:260px;top:23px;font-size:8.3px;color:#dcdcdc">100 %</div><div class="t" style="left:5px;top:43px;font-size:8.3px;color:#dcdcdc">Pha trộn</div><div class="a" style="left:81px;top:38px;width:204px;height:17px;background:#585858"><div class="t" style="left:2px;top:5px;font-size:8.3px;color:#e2e2e2">Bình thường</div></div><div class="a" style="left:7.5px;top:62.500px;width:8.500px;height:8.500px;border:1px solid #e0e0e0;border-radius:1px;background:#2e2e2e"></div><div class="t" style="left:19.500px;top:63px;font-size:8.300px;color:#dcdcdc">Bảo vệ alpha</div><div class="a" style="left:105.5px;top:62.500px;width:8.500px;height:8.500px;border:1px solid #6a6a6a;border-radius:1px;background:#2e2e2e"></div><div class="t" style="left:117.500px;top:63px;font-size:8.300px;color:#7c7c7c">Xén bớt</div><div class="a" style="left:203.5px;top:62.500px;width:8.500px;height:8.500px;border:1px solid #e0e0e0;border-radius:1px;background:#2e2e2e"></div><div class="t" style="left:215.500px;top:63px;font-size:8.300px;color:#dcdcdc">Khóa</div><div class="a" style="left:2px;top:78px;width:280px;height:132px;background:#4a4846;overflow:hidden"><div class="a" style="left:0;top:0;width:280px;height:29.500px;background:#5c5c5c;border-bottom:1px solid #474747"></div><div class="a" style="left:0;top:29.500px;width:15px;height:30px;background:#646464"></div><div class="a" style="left:15px;top:29.500px;width:265px;height:30px;background:#4d96d2"></div><div class="a" style="left:3.500px;top:11px;width:7px;height:7px;border-radius:50%;background:#dadada"></div><div class="a" style="left:3.500px;top:41px;width:7px;height:7px;border-radius:50%;background:#dadada"></div><div class="a chk" style="left:26px;top:10.500px;width:26.500px;height:8px;background-size:4px 4px;background-position:0 0,2px 2px;overflow:hidden"><div class="t" style="left:1px;top:1.500px;font-size:5px;color:#e03040;letter-spacing:-.3px;font-family:'Liberation Serif',serif;font-weight:bold">@@@@@@@</div></div><div class="a" style="left:26px;top:33px;width:26.500px;height:23.500px;background:#fff"><svg width="26.500" height="23.500" viewBox="193 90 519 440"><path d="M400 421C300 400 283 360 283 310 290 230 380 165 460 166 560 170 640 260 640 330 640 390 600 415 518 422" fill="none" stroke="#333" stroke-width="15"/><circle cx="380" cy="271" r="38"/><circle cx="535" cy="273" r="38"/><circle cx="340" cy="343" r="30" fill="#ff8a8a"/><circle cx="580" cy="340" r="32" fill="#ff7575"/><path d="M398 424 382 495M522 424 536 495" stroke="#333" stroke-width="14"/><rect x="436" y="427" width="49" height="63" fill="#e9151b"/><circle cx="448" cy="138" r="22" fill="#5ee88a"/></svg></div><div class="t" style="left:65px;top:9.500px;font-size:9.300px;color:#f2f2f2">@LucyHappy17</div><div class="t" style="left:65px;top:39.500px;font-size:9.500px;color:#fff;font-weight:bold">Lớp1</div><svg class="a" style="left:264px;top:38.500px" width="13" height="13" viewBox="-5 -5 10 10"><g fill="#fff"><circle r="3.200"/><rect x="-1" y="-4.900" width="2" height="3" transform="rotate(0)"/><rect x="-1" y="-4.900" width="2" height="3" transform="rotate(45)"/><rect x="-1" y="-4.900" width="2" height="3" transform="rotate(90)"/><rect x="-1" y="-4.900" width="2" height="3" transform="rotate(135)"/><rect x="-1" y="-4.900" width="2" height="3" transform="rotate(180)"/><rect x="-1" y="-4.900" width="2" height="3" transform="rotate(225)"/><rect x="-1" y="-4.900" width="2" height="3" transform="rotate(270)"/><rect x="-1" y="-4.900" width="2" height="3" transform="rotate(315)"/></g><circle r="1.200" fill="#4d96d2"/></svg></div>
<div class="a" style="left:282px;top:78px;width:3px;height:132px;background:#2e2e2e"><div class="a" style="left:0;top:22px;width:3px;height:40px;background:#666"></div></div><div class="a" style="left:0;top:210px;width:285px;height:23.500px;background:#2a2a2a"></div><div class="btn" style="left:4.7px;top:213.300px;width:17.3px;height:17px;background:#3f3f3f;"><svg width="17.3" height="17" viewBox="0 0 17.3 17"><path d="M5.500 3.500H10L12.500 6V13.500H5.500Z" fill="#5c5c5c" stroke="#e8e8e8" stroke-width="1.200"/></svg></div><div class="btn" style="left:25.0px;top:213.300px;width:17.6px;height:17px;background:#3f3f3f;"><svg width="17.6" height="17" viewBox="0 0 17.6 17"><path d="M5.500 3.500H10L12.500 6V13.500H5.500Z" fill="#5c5c5c" stroke="#e8e8e8" stroke-width="1.200"/><text x="7.300" y="12" font-size="6" fill="#e8e8e8" font-family="Liberation Sans,sans-serif" font-weight="bold">8</text></svg></div><div class="btn" style="left:45.8px;top:213.300px;width:17.2px;height:17px;background:#3f3f3f;"><svg width="17.2" height="17" viewBox="0 0 17.2 17"><path d="M5.500 3.500H10L12.500 6V13.500H5.500Z" fill="#5c5c5c" stroke="#e8e8e8" stroke-width="1.200"/><text x="7.300" y="12" font-size="6" fill="#e8e8e8" font-family="Liberation Sans,sans-serif" font-weight="bold">1</text></svg></div><div class="btn" style="left:66.4px;top:213.300px;width:22.6px;height:17px;background:#3f3f3f;"><svg width="22.6" height="17" viewBox="0 0 22.6 17"><path d="M4.500 3.500H9L11.500 6V10M4.500 3.500V13.500H8" fill="none" stroke="#e8e8e8" stroke-width="1.200"/><path d="M10.500 10V15M8 12.500H13" stroke="#e8e8e8" stroke-width="1.300"/><path d="M15 7.500H20.500L17.750 10.800Z" fill="#e8e8e8"/></svg></div><div class="btn" style="left:92.0px;top:213.300px;width:18.0px;height:17px;background:#3f3f3f;"><svg width="18.0" height="17" viewBox="0 0 18.0 17"><path d="M3.500 5H8L9.500 6.500H14.500V13.500H3.500Z" fill="#e8e8e8"/></svg></div><div class="a" style="left:114px;top:216px;width:1px;height:13px;background:#555"></div><div class="btn" style="left:118.0px;top:213.300px;width:18.0px;height:17px;background:#3f3f3f;"><svg width="18.0" height="17" viewBox="0 0 18.0 17"><path d="M4.500 6.500H11V13.500H4.500ZM7 6V4H13.500V11H11.500" fill="none" stroke="#e8e8e8" stroke-width="1.200"/></svg></div><div class="btn" style="left:139.0px;top:213.300px;width:17.5px;height:17px;background:#1f1f1f;border:1px solid #444;"><svg width="17.5" height="17" viewBox="0 0 17.5 17"><path d="M3.500 4H7V7H3.500ZM3.500 10H7V13H3.500Z" fill="none" stroke="#e8e8e8" stroke-width="1"/><path d="M7 5.500H9V11.500H7M9 8.500H10.500" stroke="#e8e8e8" stroke-width="1" fill="none"/><rect x="10.500" y="6.500" width="4" height="4" fill="#e8e8e8"/></svg></div><div class="a" style="left:160.500px;top:216px;width:1px;height:13px;background:#555"></div><div class="btn" style="left:164.5px;top:213.300px;width:17.5px;height:17px;background:#3f3f3f;"><svg width="17.5" height="17" viewBox="0 0 17.5 17"><path d="M5 6.500H12.500V14H5ZM4 5H13.500M7 4.500V3.500H10.500V4.500" fill="none" stroke="#e8e8e8" stroke-width="1.200"/><path d="M7.300 8V12.500M8.750 8V12.500M10.200 8V12.500" stroke="#e8e8e8" stroke-width=".9"/></svg></div><div class="a" style="left:0;top:233.500px;width:285px;height:21.500px;background:#232323"></div><div class="a" style="left:0;top:235px;width:20.500px;height:16px;background:#3d3d3d;border-radius:2px 2px 0 0"><div class="t" style="left:4px;top:5px;font-size:8.300px;color:#d8d8d8">Lớp</div></div><div class="a" style="left:21.500px;top:235.500px;width:40px;height:14px;background:#2c2c2c;border:1px solid #383838"><div class="t" style="left:3px;top:2.500px;font-size:8.300px;color:#d0d0d0">Hoa tiêu</div></div></div>
<div class="a" style="left:739px;top:330px;width:285px;height:195px;background:#1e1e1e"></div>
<div class="pn" style="left:739px;top:336px;width:285px;height:157px;background:#474442"><div class="hd" style="height:16.500px"><div class="t" style="left:119px;top:4px;font-size:8.400px;color:#cfcfcf">Brush Size</div><svg class="a" style="left:276.0px;top:3.0px" width="9" height="9" viewBox="0 0 9 9"><path d="M4.6 2H1.2V7.8H7V4.6" fill="none" stroke="#ddd" stroke-width="1"/><path d="M4 5 7.6 1.4M5.2 1H8V3.8" fill="none" stroke="#ddd" stroke-width="1"/></svg></div>
<div class="a" style="left:274.500px;top:16.500px;width:10.500px;height:140.500px;background:#3e3b39"></div><div class="a" style="left:0.50px;top:17.00px;width:29.45px;height:37.00px;background:#555"><div class="a" style="left:14.22px;top:14.40px;width:1px;height:1px;background:rgba(240,240,240,0.35)"></div><div class="t" style="left:0;width:29.45px;text-align:center;top:28.8px;font-size:7.800px;color:#f0f0f0">1</div></div><div class="a" style="left:30.95px;top:17.00px;width:29.45px;height:37.00px;background:#555"><div class="a" style="left:14.22px;top:14.40px;width:1px;height:1px;background:rgba(240,240,240,0.60)"></div><div class="t" style="left:0;width:29.45px;text-align:center;top:28.8px;font-size:7.800px;color:#f0f0f0">1.5</div></div><div class="a" style="left:61.40px;top:17.00px;width:29.45px;height:37.00px;background:#555"><svg class="a" style="left:0;top:0" width="29.45" height="30"><circle cx="14.72" cy="14.90" r="0.80" fill="#f2f2f2"/></svg><div class="t" style="left:0;width:29.45px;text-align:center;top:28.8px;font-size:7.800px;color:#f0f0f0">2</div></div><div class="a" style="left:91.85px;top:17.00px;width:29.45px;height:37.00px;background:#555"><svg class="a" style="left:0;top:0" width="29.45" height="30"><circle cx="14.73" cy="14.90" r="1.20" fill="#f2f2f2"/></svg><div class="t" style="left:0;width:29.45px;text-align:center;top:28.8px;font-size:7.800px;color:#f0f0f0">3</div></div><div class="a" style="left:122.30px;top:17.00px;width:29.45px;height:37.00px;background:#555"><svg class="a" style="left:0;top:0" width="29.45" height="30"><circle cx="14.72" cy="14.90" r="1.60" fill="#f2f2f2"/></svg><div class="t" style="left:0;width:29.45px;text-align:center;top:28.8px;font-size:7.800px;color:#f0f0f0">4</div></div><div class="a" style="left:152.75px;top:17.00px;width:29.45px;height:37.00px;background:#555"><svg class="a" style="left:0;top:0" width="29.45" height="30"><circle cx="14.72" cy="14.90" r="2.00" fill="#f2f2f2"/></svg><div class="t" style="left:0;width:29.45px;text-align:center;top:28.8px;font-size:7.800px;color:#f0f0f0">5</div></div><div class="a" style="left:183.20px;top:17.00px;width:29.45px;height:37.00px;background:#555"><svg class="a" style="left:0;top:0" width="29.45" height="30"><circle cx="14.72" cy="14.90" r="2.70" fill="#f2f2f2"/></svg><div class="t" style="left:0;width:29.45px;text-align:center;top:28.8px;font-size:7.800px;color:#f0f0f0">7</div></div><div class="a" style="left:213.65px;top:17.00px;width:29.45px;height:37.00px;background:#555"><svg class="a" style="left:0;top:0" width="29.45" height="30"><circle cx="14.72" cy="14.90" r="4.20" fill="#f2f2f2"/></svg><div class="t" style="left:0;width:29.45px;text-align:center;top:28.8px;font-size:7.800px;color:#f0f0f0">10</div></div><div class="a" style="left:244.10px;top:17.00px;width:29.45px;height:37.00px;background:#555"><svg class="a" style="left:0;top:0" width="29.45" height="30"><circle cx="14.72" cy="14.90" r="4.90" fill="#f2f2f2"/></svg><div class="t" style="left:0;width:29.45px;text-align:center;top:28.8px;font-size:7.800px;color:#f0f0f0">12</div></div><div class="a" style="left:0.50px;top:55.00px;width:29.45px;height:37.00px;background:#555"><svg class="a" style="left:0;top:0" width="29.45" height="30"><circle cx="14.73" cy="15.30" r="5.80" fill="#f2f2f2"/></svg><div class="t" style="left:0;width:29.45px;text-align:center;top:29.3px;font-size:7.800px;color:#f0f0f0">15</div></div><div class="a" style="left:30.95px;top:55.00px;width:29.45px;height:37.00px;background:#555"><svg class="a" style="left:0;top:0" width="29.45" height="30"><circle cx="14.72" cy="15.30" r="8.00" fill="#f2f2f2"/></svg><div class="t" style="left:0;width:29.45px;text-align:center;top:29.3px;font-size:7.800px;color:#f0f0f0">20</div></div><div class="a" style="left:61.40px;top:55.00px;width:29.45px;height:37.00px;background:#555"><svg class="a" style="left:0;top:0" width="29.45" height="30"><circle cx="14.72" cy="15.30" r="9.40" fill="#f2f2f2"/></svg><div class="t" style="left:0;width:29.45px;text-align:center;top:29.3px;font-size:7.800px;color:#f0f0f0">25</div></div><div class="a" style="left:91.85px;top:55.00px;width:29.45px;height:37.00px;background:#555"><svg class="a" style="left:0;top:0" width="29.45" height="30"><circle cx="14.72" cy="15.30" r="9.40" fill="#f2f2f2"/></svg><div class="t" style="left:0;width:29.45px;text-align:center;top:29.3px;font-size:7.800px;color:#f0f0f0">30</div></div><div class="a" style="left:122.30px;top:55.00px;width:29.45px;height:37.00px;background:#555"><svg class="a" style="left:0;top:0" width="29.45" height="30"><circle cx="14.72" cy="15.30" r="9.40" fill="#f2f2f2"/></svg><div class="t" style="left:0;width:29.45px;text-align:center;top:29.3px;font-size:7.800px;color:#f0f0f0">40</div></div><div class="a" style="left:152.75px;top:55.00px;width:29.45px;height:37.00px;background:#555"><svg class="a" style="left:0;top:0" width="29.45" height="30"><circle cx="14.72" cy="15.30" r="9.40" fill="#f2f2f2"/></svg><div class="t" style="left:0;width:29.45px;text-align:center;top:29.3px;font-size:7.800px;color:#f0f0f0">50</div></div><div class="a" style="left:183.20px;top:55.00px;width:29.45px;height:37.00px;background:#555"><svg class="a" style="left:0;top:0" width="29.45" height="30"><circle cx="14.72" cy="15.30" r="9.40" fill="#f2f2f2"/></svg><div class="t" style="left:0;width:29.45px;text-align:center;top:29.3px;font-size:7.800px;color:#f0f0f0">70</div></div><div class="a" style="left:213.65px;top:55.00px;width:29.45px;height:37.00px;background:#555"><svg class="a" style="left:0;top:0" width="29.45" height="30"><circle cx="14.72" cy="15.30" r="9.40" fill="#f2f2f2"/></svg><div class="t" style="left:0;width:29.45px;text-align:center;top:29.3px;font-size:7.800px;color:#f0f0f0">100</div></div><div class="a" style="left:244.10px;top:55.00px;width:29.45px;height:37.00px;background:#555"><svg class="a" style="left:0;top:0" width="29.45" height="30"><circle cx="14.72" cy="15.30" r="9.40" fill="#f2f2f2"/></svg><div class="t" style="left:0;width:29.45px;text-align:center;top:29.3px;font-size:7.800px;color:#f0f0f0">150</div></div><div class="a" style="left:0.50px;top:93.00px;width:29.45px;height:37.00px;background:#555"><svg class="a" style="left:0;top:0" width="29.45" height="30"><circle cx="14.72" cy="15.30" r="9.40" fill="#f2f2f2"/></svg><div class="t" style="left:0;width:29.45px;text-align:center;top:29.3px;font-size:7.800px;color:#f0f0f0">200</div></div><div class="a" style="left:30.95px;top:93.00px;width:29.45px;height:37.00px;background:#555"><svg class="a" style="left:0;top:0" width="29.45" height="30"><circle cx="14.72" cy="15.30" r="9.40" fill="#f2f2f2"/></svg><div class="t" style="left:0;width:29.45px;text-align:center;top:29.3px;font-size:7.800px;color:#f0f0f0">300</div></div><div class="a" style="left:61.40px;top:93.00px;width:29.45px;height:37.00px;background:#555"><svg class="a" style="left:0;top:0" width="29.45" height="30"><circle cx="14.72" cy="15.30" r="9.40" fill="#f2f2f2"/></svg><div class="t" style="left:0;width:29.45px;text-align:center;top:29.3px;font-size:7.800px;color:#f0f0f0">400</div></div><div class="a" style="left:91.85px;top:93.00px;width:29.45px;height:37.00px;background:#555"><svg class="a" style="left:0;top:0" width="29.45" height="30"><circle cx="14.72" cy="15.30" r="9.40" fill="#f2f2f2"/></svg><div class="t" style="left:0;width:29.45px;text-align:center;top:29.3px;font-size:7.800px;color:#f0f0f0">500</div></div><div class="a" style="left:122.30px;top:93.00px;width:29.45px;height:37.00px;background:#555"><svg class="a" style="left:0;top:0" width="29.45" height="30"><circle cx="14.72" cy="15.30" r="9.40" fill="#f2f2f2"/></svg><div class="t" style="left:0;width:29.45px;text-align:center;top:29.3px;font-size:7.800px;color:#f0f0f0">700</div></div><div class="a" style="left:152.75px;top:93.00px;width:29.45px;height:37.00px;background:#555"><svg class="a" style="left:0;top:0" width="29.45" height="30"><circle cx="14.72" cy="15.30" r="9.40" fill="#f2f2f2"/></svg><div class="t" style="left:0;width:29.45px;text-align:center;top:29.3px;font-size:7.800px;color:#f0f0f0">1000</div></div></div>
<div class="pn" style="left:739px;top:495.800px;width:285px;height:29.200px;background:#2a2a2a"><div class="hd" style="height:16.500px"><div class="t" style="left:119.500px;top:4.500px;font-size:8.400px;color:#cfcfcf">Reference</div><svg class="a" style="left:276.0px;top:3.0px" width="9" height="9" viewBox="0 0 9 9"><path d="M4.6 2H1.2V7.8H7V4.6" fill="none" stroke="#ddd" stroke-width="1"/><path d="M4 5 7.6 1.4M5.2 1H8V3.8" fill="none" stroke="#ddd" stroke-width="1"/></svg></div>
<div class="btn" style="left:4.0px;top:19px;width:17.3px;height:17px;background:#3f3f3f;"><svg width="17.3" height="17" viewBox="0 2.8 17.3 17" style="position:absolute;left:0;top:0"><path d="M4 17V11A4.600 4.600 0 0 1 13.300 11V17Z" fill="#e8e8e8"/><circle cx="8.650" cy="10.500" r="2" fill="#3f3f3f"/></svg></div><div class="btn" style="left:24.0px;top:19px;width:17.7px;height:17px;background:#3f3f3f;"><svg width="17.7" height="17" viewBox="0 2.8 17.7 17" style="position:absolute;left:0;top:0"><path d="M3.500 6H8L9.500 7.500H14.500V14H3.500Z" fill="#e8e8e8"/></svg></div><div class="btn" style="left:44.8px;top:19px;width:17.2px;height:17px;background:#222;border:1px solid #444;"><svg width="17.2" height="17" viewBox="0 2.8 17.2 17" style="position:absolute;left:0;top:0"><path d="M5.500 7 11.500 13.500M11.500 7 5.500 13.500" stroke="#e8e8e8" stroke-width="1.600"/></svg></div><div class="btn" style="left:70.0px;top:19px;width:17.5px;height:17px;background:#222;border:1px solid #444;"><svg width="17.5" height="17" viewBox="0 2.8 17.5 17" style="position:absolute;left:0;top:0"><circle cx="8.750" cy="10" r="4" fill="none" stroke="#e8e8e8" stroke-width="1.200"/><path d="M6.750 10H10.750M8.750 8V12" stroke="#e8e8e8" stroke-width="1.100"/></svg></div><div class="btn" style="left:91.0px;top:19px;width:17.6px;height:17px;background:#222;border:1px solid #444;"><svg width="17.6" height="17" viewBox="0 2.8 17.6 17" style="position:absolute;left:0;top:0"><rect x="3.500" y="5" width="10.500" height="9" fill="none" stroke="#e8e8e8" stroke-width="1.200"/><path d="M5.500 9V7H7.500M12 9V7H10" stroke="#e8e8e8" stroke-width="1" fill="none"/></svg></div><div class="btn" style="left:111.0px;top:19px;width:18.0px;height:17px;background:#222;border:1px solid #444;"><svg width="18.0" height="17" viewBox="0 2.8 18.0 17" style="position:absolute;left:0;top:0"><circle cx="9" cy="10" r="4" fill="none" stroke="#e8e8e8" stroke-width="1.200"/><path d="M7 10H11" stroke="#e8e8e8" stroke-width="1.100"/></svg></div><div class="btn" style="left:137.6px;top:19px;width:17.4px;height:17px;background:#222;border:1px solid #444;"><svg width="17.4" height="17" viewBox="0 2.8 17.4 17" style="position:absolute;left:0;top:0"><path d="M11 4.500 13 6.500 8 12 6 10Z" fill="#e8e8e8"/><path d="M5.500 10.500 7.500 12.500 4 14Z" fill="#e8e8e8"/><path d="M13 3V5M14 4H12" stroke="#e8e8e8" stroke-width=".8"/></svg></div><div class="btn" style="left:157.0px;top:19px;width:18.6px;height:17px;background:#4d9ad6;"><svg width="18.6" height="17" viewBox="0 2.8 18.6 17" style="position:absolute;left:0;top:0"><path d="M5.500 17V10.500L4 8.500 5 7.500 6.800 9V5.500H8V8.500V4.500H9.300V8.500V5H10.500V8.500V6H11.700V9.500L13.500 8 14.500 9 12.500 12V17Z" fill="#e8f4ff"/></svg></div><div class="btn" style="left:184.0px;top:19px;width:18.0px;height:17px;background:#222;border:1px solid #444;"><svg width="18.0" height="17" viewBox="0 2.8 18.0 17" style="position:absolute;left:0;top:0"><path d="M4.500 10A4.500 4.500 0 1 1 9 14.500" fill="none" stroke="#e8e8e8" stroke-width="1.500"/><path d="M2.500 9.500 4.500 12.500 6.800 9.500Z" fill="#e8e8e8"/><circle cx="9.500" cy="10.500" r="1.800" fill="#e8e8e8"/></svg></div><div class="btn" style="left:204.0px;top:19px;width:18.0px;height:17px;background:#222;border:1px solid #444;"><svg width="18.0" height="17" viewBox="0 2.8 18.0 17" style="position:absolute;left:0;top:0"><path d="M4 6 7 8H11L14 6 12.500 10 14 14.500 11 12.500H7L4 14.500 5.500 10Z" fill="#e8e8e8"/></svg></div><div class="btn" style="left:224.8px;top:19px;width:17.9px;height:17px;background:#222;border:1px solid #444;"><svg width="17.9" height="17" viewBox="0 2.8 17.9 17" style="position:absolute;left:0;top:0"><path d="M13.500 10A4.500 4.500 0 1 0 9 14.500" fill="none" stroke="#e8e8e8" stroke-width="1.500"/><path d="M11.200 9.500 13.500 12.500 15.500 9.500Z" fill="#e8e8e8"/><circle cx="8.500" cy="10.500" r="1.800" fill="#e8e8e8"/></svg></div><div class="btn" style="left:250.0px;top:19px;width:18.0px;height:17px;background:#222;border:1px solid #444;"><svg width="18.0" height="17" viewBox="0 2.8 18.0 17" style="position:absolute;left:0;top:0"><rect x="4" y="9" width="6" height="6" fill="none" stroke="#e8e8e8" stroke-width="1.200"/><rect x="8" y="6" width="6" height="6" fill="#e8e8e8"/></svg></div><div class="a" style="left:66.0px;top:20.500px;width:1px;height:9px;background:#555"></div><div class="a" style="left:133.0px;top:20.500px;width:1px;height:9px;background:#555"></div><div class="a" style="left:179.5px;top:20.500px;width:1px;height:9px;background:#555"></div><div class="a" style="left:246.0px;top:20.500px;width:1px;height:9px;background:#555"></div></div>
<!--RIGHT-->
</body></html>
